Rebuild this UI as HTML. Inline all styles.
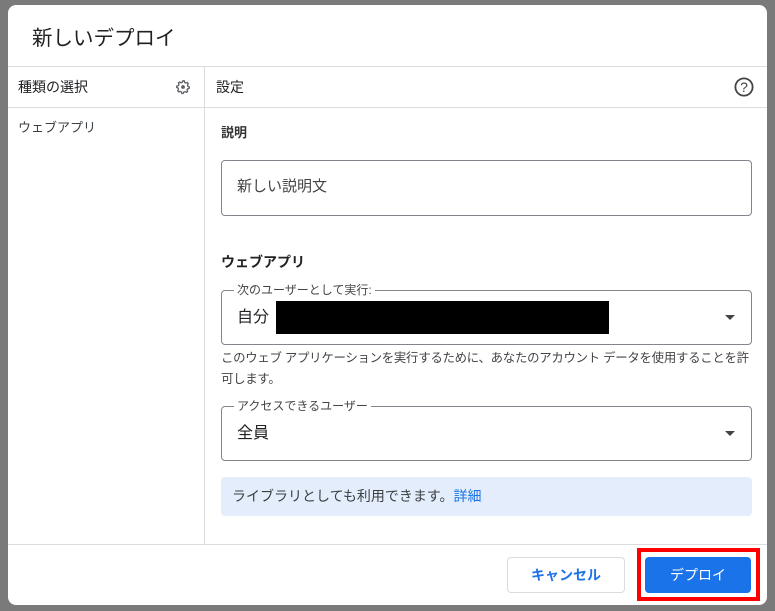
<!DOCTYPE html>
<html><head><meta charset="utf-8"><style>
*{box-sizing:border-box;margin:0;padding:0}
body{width:775px;height:611px;background:#7a7a7a;position:relative;overflow:hidden;font-family:"Liberation Sans","Noto Sans CJK JP",sans-serif;color:#202124}
.dlg{position:absolute;left:8px;top:5px;width:759px;height:600px;background:#fff;border-radius:8px;overflow:hidden}
.a{position:absolute;white-space:nowrap}
.hl{position:absolute;height:1px;background:#dadce0}
.box{position:absolute;border:1px solid #80868b;border-radius:4px}
.leg{position:absolute;background:#fff;padding:0 3px;font-size:12px;color:#444;top:-9px;left:12px;line-height:16px}
.tri{position:absolute;right:16px;top:24px;width:0;height:0;border-left:5px solid transparent;border-right:5px solid transparent;border-top:5px solid #444}
</style></head><body>
<div class="dlg">
  <div class="a" style="left:24px;top:20px;font-size:20.5px;line-height:28px;color:#202124">新しいデプロイ</div>
  <div class="hl" style="left:0;top:61px;width:759px"></div>
  <div class="hl" style="left:0;top:102px;width:759px"></div>
  <div style="position:absolute;left:196px;top:61px;width:1px;height:478px;background:#dadce0"></div>
  <div class="hl" style="left:0;top:539px;width:759px"></div>
  <div class="a" style="left:10px;top:73px;font-size:14px;line-height:18px">種類の選択</div>
  <svg class="a" style="left:167px;top:74px" width="16" height="16" viewBox="0 0 24 24"><path fill="none" stroke="#5f6368" stroke-width="2" d="M12 2.5l2 .3.5 2.4 1.6.9 2.3-.8 1.4 1.6-1 2.2.5 1.8 2.2 1.1-.2 2-2.3.7-.9 1.6.8 2.3-1.6 1.4-2.2-1-1.8.5-1.1 2.2h-2l-.7-2.3-1.6-.9-2.3.8-1.4-1.6 1-2.2-.5-1.8-2.2-1.1.2-2 2.3-.7.9-1.6-.8-2.3 1.6-1.4 2.2 1 1.8-.5z"/><circle cx="12" cy="12" r="2.8" fill="#5f6368"/></svg>
  <div class="a" style="left:10px;top:114px;font-size:13px;line-height:18px;color:#3c4043">ウェブアプリ</div>
  <div class="a" style="left:208px;top:73px;font-size:14px;line-height:18px">設定</div>
  <svg class="a" style="left:726px;top:72px" width="20" height="20" viewBox="0 0 20 20"><circle cx="10" cy="10" r="8.6" fill="none" stroke="#444" stroke-width="1.8"/><text x="10" y="15" text-anchor="middle" font-size="14" fill="#444" font-family="Liberation Sans">?</text></svg>
  <div class="a" style="left:213px;top:119px;font-size:13px;line-height:18px;font-weight:bold;color:#333">説明</div>
  <div class="box" style="left:213px;top:155px;width:531px;height:56px"><div class="a" style="left:15px;top:16px;font-size:15px;line-height:20px;color:#444">新しい説明文</div></div>
  <div class="a" style="left:213px;top:248px;font-size:14px;line-height:18px;font-weight:bold;color:#222">ウェブアプリ</div>
  <div class="box" style="left:213px;top:285px;width:531px;height:55px"><div class="leg">次のユーザーとして実行:</div><div class="a" style="left:15px;top:16px;font-size:16px;line-height:22px">自分</div><div class="a" style="left:54px;top:10px;width:333px;height:33px;background:#000"></div><div class="tri"></div></div>
  <div class="a" style="left:213px;top:343px;font-size:12.4px;line-height:21px;color:#444;letter-spacing:-0.25px">このウェブ アプリケーションを実行するために、あなたのアカウント データを使用することを許<br>可します。</div>
  <div class="box" style="left:213px;top:401px;width:531px;height:55px"><div class="leg">アクセスできるユーザー</div><div class="a" style="left:15px;top:16px;font-size:16px;line-height:22px">全員</div><div class="tri"></div></div>
  <div class="a" style="left:213px;top:472px;width:531px;height:39px;background:#e4edfb;border-radius:4px"><div class="a" style="left:11px;top:10px;font-size:14px;line-height:18px;color:#3c4043">ライブラリとしても利用できます。<span style="color:#1a73e8">詳細</span></div></div>
  <div class="a" style="left:499px;top:552px;width:118px;height:36px;border:1px solid #dadce0;border-radius:4px;color:#1a73e8;font-size:14px;font-weight:bold;text-align:center;line-height:34px">キャンセル</div>
  <div class="a" style="left:629px;top:543px;width:123px;height:53px;border:4px solid #f00"></div>
  <div class="a" style="left:637px;top:552px;width:106px;height:36px;background:#1a73e8;border-radius:4px;color:#fff;font-size:14px;text-align:center;line-height:36px">デプロイ</div>
</div>
</body></html>
